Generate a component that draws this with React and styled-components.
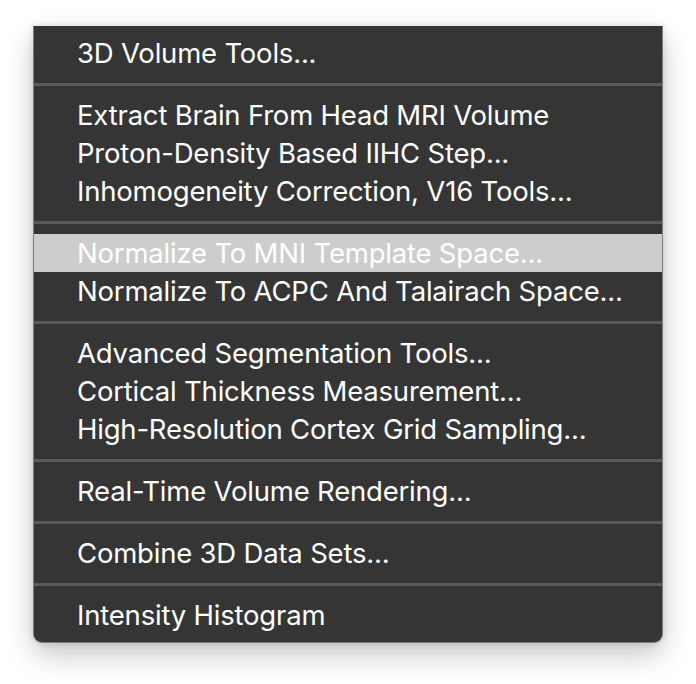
import React from 'react';
import styled, { createGlobalStyle } from 'styled-components';

const GlobalStyle = createGlobalStyle`
  html, body {
    margin: 0;
    padding: 0;
    background: #ffffff;
  }
  body {
    font-family: Inter, "Noto Sans", "Liberation Sans", sans-serif;
    -webkit-font-smoothing: antialiased;
  }
`;

const Stage = styled.div`
  width: 696px;
  height: 684px;
  padding: 26px 0 0 33px;
  box-sizing: border-box;
`;

const Menu = styled.ul`
  list-style: none;
  margin: 0;
  width: 630px;
  box-sizing: border-box;
  padding: 8px 0;
  background: #353535;
  border: 1px solid #7d7d7d;
  border-top: none;
  border-radius: 0 0 9px 9px;
  box-shadow: 0 12px 28px rgba(0, 0, 0, 0.22), 0 0 6px rgba(0, 0, 0, 0.12);
`;

const Item = styled.li`
  height: 38px;
  box-sizing: border-box;
  display: flex;
  align-items: center;
  padding: 0 0 1px 43px;
  font-size: 27.5px;
  letter-spacing: -0.2px;
  color: #ffffff;
  background: ${p => (p.$active ? '#cdcdcd' : 'transparent')};
  white-space: nowrap;
  cursor: default;
`;

const Separator = styled.li`
  height: 24px;
  display: flex;
  align-items: center;

  &::after {
    content: '';
    flex: 1;
    height: 3px;
    background: #5b5b5b;
  }
`;

const sections = [
  ['3D Volume Tools...'],
  [
    'Extract Brain From Head MRI Volume',
    'Proton-Density Based IIHC Step...',
    'Inhomogeneity Correction, V16 Tools...',
  ],
  ['Normalize To MNI Template Space...', 'Normalize To ACPC And Talairach Space...'],
  [
    'Advanced Segmentation Tools...',
    'Cortical Thickness Measurement...',
    'High-Resolution Cortex Grid Sampling...',
  ],
  ['Real-Time Volume Rendering...'],
  ['Combine 3D Data Sets...'],
  ['Intensity Histogram'],
];

const ACTIVE = 'Normalize To MNI Template Space...';

export default function App() {
  return (
    <Stage>
      <GlobalStyle />
      <Menu>
        {sections.map((group, i) => (
          <React.Fragment key={i}>
            {i > 0 && <Separator />}
            {group.map(label => (
              <Item key={label} $active={label === ACTIVE}>
                {label}
              </Item>
            ))}
          </React.Fragment>
        ))}
      </Menu>
    </Stage>
  );
}
